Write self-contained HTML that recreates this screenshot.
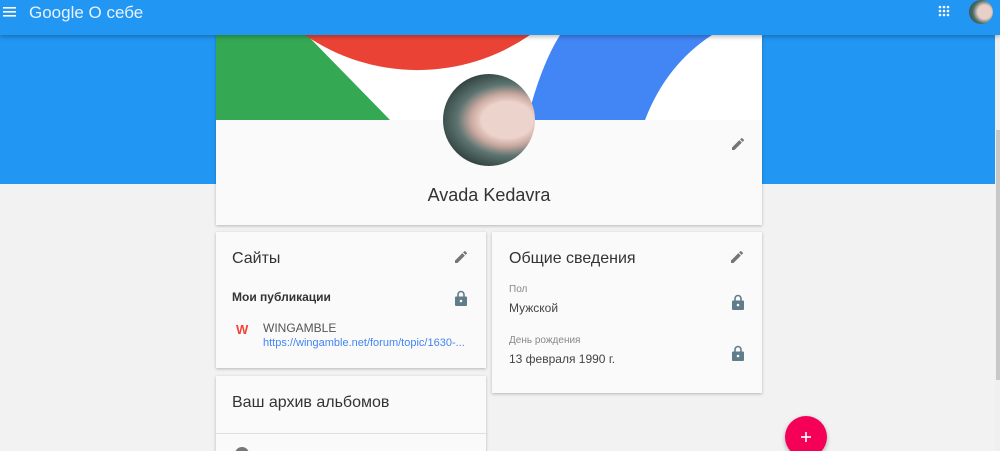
<!DOCTYPE html>
<html><head><meta charset="utf-8"><style>
*{margin:0;padding:0;box-sizing:border-box}
html,body{width:1000px;height:451px;overflow:hidden}
body{background:#f2f2f2;font-family:"Liberation Sans","Noto Sans CJK SC",sans-serif;position:relative}
.hdr{position:absolute;left:0;top:0;width:1000px;height:35px;background:#2196f3;box-shadow:0 2px 4px rgba(0,0,0,.25);z-index:5}
.bluebg{position:absolute;left:0;top:35px;width:995px;height:149px;background:#2196f3}
.sb{position:absolute;left:995px;top:35px;width:5px;height:416px;background:#f0f0f0}
.sbt{position:absolute;left:996px;top:130px;width:4px;height:250px;background:#c8c8c8}
.card{position:absolute;background:#fafafa;box-shadow:0 1px 3px rgba(0,0,0,.25)}
.t{position:absolute;color:#333;white-space:nowrap}
.pen{position:absolute;width:16px;height:16px}
.lock{position:absolute;width:12px;height:16px}
</style></head><body>
<div class="hdr">
 <svg style="position:absolute;left:3px;top:6px" width="14" height="12"><rect y="1" width="13" height="1.6" fill="#fff"/><rect y="5" width="13" height="1.6" fill="#fff"/><rect y="9" width="13" height="1.6" fill="#fff"/></svg>
 <div class="t" style="left:29px;top:3px;font-size:17px;color:#e8f2fd">Google О себе</div>
 <svg style="position:absolute;left:938px;top:5px" width="12" height="12" fill="#fff"><circle cx="2" cy="2" r="1.3"/><circle cx="6" cy="2" r="1.3"/><circle cx="10" cy="2" r="1.3"/><circle cx="2" cy="6" r="1.3"/><circle cx="6" cy="6" r="1.3"/><circle cx="10" cy="6" r="1.3"/><circle cx="2" cy="10" r="1.3"/><circle cx="6" cy="10" r="1.3"/><circle cx="10" cy="10" r="1.3"/></svg>
 <div style="position:absolute;left:969px;top:0;width:24px;height:24px;border-radius:50%;background:radial-gradient(circle at 65% 50%,#e8cfc8 0 35%,#4a6b66 60%,#2d3f3c)"></div>
</div>
<div class="bluebg"></div>
<div class="sb"></div><div class="sbt"></div>

<div class="card" style="left:216px;top:35px;width:546px;height:190px;overflow:visible">
 <svg style="position:absolute;left:0;top:0" width="546" height="85">
  <rect width="546" height="85" fill="#fff"/>
  <polygon points="0,0 91,0 174,85 0,85" fill="#34a853"/>
  <path d="M89,0 A198,198 0 0 0 314,0 Z" fill="#ea4335"/>
  <path d="M344,0 L496,0 Q450,30 429,85 L311,85 Q325,30 344,0 Z" fill="#4285f4"/>
 </svg>
 <div style="position:absolute;left:227px;top:39px;width:92px;height:92px;border-radius:50%;background:radial-gradient(ellipse at 70% 50%,#ecd3cb 0 28%,#c9a9a0 40%,#5d7470 55%,#2a3b38 80%);"></div>
 <svg class="pen" style="left:514px;top:101px" viewBox="0 0 24 24"><path fill="#757575" d="M3 17.25V21h3.75L17.81 9.94l-3.75-3.75L3 17.25zM20.71 7.04a1 1 0 000-1.41l-2.34-2.34a1 1 0 00-1.41 0l-1.83 1.83 3.75 3.75 1.83-1.83z"/></svg>
 <div class="t" style="left:0;width:546px;text-align:center;top:150px;font-size:18px;color:#333">Avada Kedavra</div>
</div>

<div class="card" style="left:216px;top:232px;width:270px;height:136px">
 <div class="t" style="left:16px;top:18px;font-size:16px">Сайты</div>
 <svg class="pen" style="left:237px;top:17px" viewBox="0 0 24 24"><path fill="#757575" d="M3 17.25V21h3.75L17.81 9.94l-3.75-3.75L3 17.25zM20.71 7.04a1 1 0 000-1.41l-2.34-2.34a1 1 0 00-1.41 0l-1.83 1.83 3.75 3.75 1.83-1.83z"/></svg>
 <div class="t" style="left:16px;top:58px;font-size:12px;font-weight:bold">Мои публикации</div>
 <svg class="lock" style="left:239px;top:58px" viewBox="0 0 12 16"><path d="M3 7V4.5a3 3 0 016 0V7" stroke="#607d8b" stroke-width="1.6" fill="none"/><rect y="6.5" width="12" height="9.5" rx="1" fill="#607d8b"/><circle cx="6" cy="11" r="1.3" fill="#fff"/></svg>
 <div class="t" style="left:20px;top:90px;font-size:13px;font-weight:bold;color:#f44336">W</div>
 <div class="t" style="left:47px;top:89px;font-size:12px;color:#555">WINGAMBLE</div>
 <div class="t" style="left:47px;top:105px;font-size:11px;color:#4285f4">https://wingamble.net/forum/topic/1630-...</div>
</div>

<div class="card" style="left:216px;top:376px;width:270px;height:90px">
 <div class="t" style="left:16px;top:18px;font-size:16px">Ваш архив альбомов</div>
 <div style="position:absolute;left:0;top:57px;width:270px;height:1px;background:#e0e0e0"></div>
 <div style="position:absolute;left:19px;top:71px;width:14px;height:14px;border-radius:50%;background:#777"></div>
</div>

<div class="card" style="left:492px;top:232px;width:270px;height:161px">
 <div class="t" style="left:17px;top:18px;font-size:16px">Общие сведения</div>
 <svg class="pen" style="left:237px;top:17px" viewBox="0 0 24 24"><path fill="#757575" d="M3 17.25V21h3.75L17.81 9.94l-3.75-3.75L3 17.25zM20.71 7.04a1 1 0 000-1.41l-2.34-2.34a1 1 0 00-1.41 0l-1.83 1.83 3.75 3.75 1.83-1.83z"/></svg>
 <div class="t" style="left:17px;top:52px;font-size:10px;color:#888">Пол</div>
 <div class="t" style="left:17px;top:69px;font-size:12px;color:#444">Мужской</div>
 <svg class="lock" style="left:240px;top:62px" viewBox="0 0 12 16"><path d="M3 7V4.5a3 3 0 016 0V7" stroke="#607d8b" stroke-width="1.6" fill="none"/><rect y="6.5" width="12" height="9.5" rx="1" fill="#607d8b"/><circle cx="6" cy="11" r="1.3" fill="#fff"/></svg>
 <div class="t" style="left:17px;top:103px;font-size:10px;color:#888">День рождения</div>
 <div class="t" style="left:17px;top:120px;font-size:12px;color:#444">13 февраля 1990 г.</div>
 <svg class="lock" style="left:240px;top:113px" viewBox="0 0 12 16"><path d="M3 7V4.5a3 3 0 016 0V7" stroke="#607d8b" stroke-width="1.6" fill="none"/><rect y="6.5" width="12" height="9.5" rx="1" fill="#607d8b"/><circle cx="6" cy="11" r="1.3" fill="#fff"/></svg>
</div>

<div style="position:absolute;left:785px;top:416px;width:42px;height:42px;border-radius:50%;background:#f50057;box-shadow:0 2px 5px rgba(0,0,0,.3)">
 <svg style="position:absolute;left:15px;top:15px" width="12" height="12"><rect x="5.2" y="1" width="1.6" height="10" fill="#fff"/><rect x="1" y="5.2" width="10" height="1.6" fill="#fff"/></svg>
</div>
</body></html>
